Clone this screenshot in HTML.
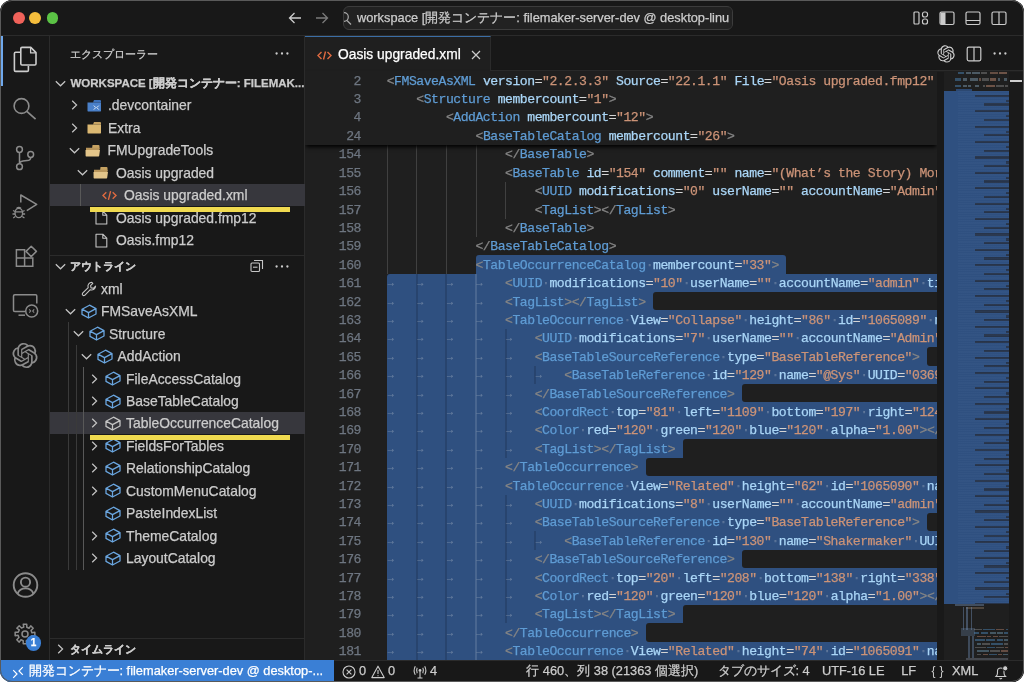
<!DOCTYPE html>
<html><head><meta charset="utf-8">
<style>
*{box-sizing:border-box;margin:0;padding:0}
html,body{width:1024px;height:682px;overflow:hidden;background:#ffffff}
body{font-family:"Liberation Sans",sans-serif;position:relative;-webkit-text-stroke:0.25px currentColor}
.win{position:absolute;left:0;top:0;width:1024px;height:682px;border-radius:12px;overflow:hidden;background:#181818;will-change:transform}
.abs{position:absolute}
.tb{left:0;top:0;width:1024px;height:36px;background:#181818;border-bottom:1px solid #2b2b2b}
.winborder{position:absolute;left:0;top:0;width:1024px;height:682px;border-radius:12px;border:1px solid #5a5a5a;pointer-events:none}
.light{position:absolute;width:11.8px;height:11.8px;border-radius:50%}
.act{left:0;top:36px;width:50px;height:624px;background:#181818;border-right:1px solid #2b2b2b}
.side{left:50px;top:36px;width:255px;height:624px;background:#181818;border-right:1px solid #2b2b2b}
.editor{left:305px;top:36px;width:719px;height:624px;background:#1f1f1f;overflow:hidden}
.tabs{left:0;top:0;width:719px;height:35px;background:#181818;border-bottom:1px solid #2b2b2b}
.tab{left:0;top:0;width:186px;height:35px;background:#1f1f1f;border-top:1px solid #3b6ea5;border-right:1px solid #2b2b2b}
.status{left:0;top:660px;width:1024px;height:22px;background:#181818;border-top:1px solid #2b2b2b;color:#cccccc;font-size:12.2px}
.cl,.ln{position:absolute;height:18.4px;line-height:18.4px;padding-top:1.6px;font-family:"Liberation Mono",monospace;font-size:13.1px;letter-spacing:-0.46px;white-space:pre}
.cl{left:81.7px}
.ln{left:0;width:56px;text-align:right;color:#6e7681}
.cl i{font-style:normal}
.cl i.ar{display:inline-block;width:7.4px;font-size:10px;letter-spacing:0;color:rgba(227,228,226,0.22);vertical-align:top;text-indent:1px}
.sel{position:absolute;background:#2f5080}
.row{position:absolute;left:0;width:255px;height:22.5px;line-height:22.5px;color:#cccccc;font-size:13.6px;white-space:nowrap}
.row .t{position:absolute;top:0}
.row svg{position:absolute}
svg{overflow:visible}
</style></head>
<body>
<div class="win">
  <!-- title bar -->
  <div class="abs tb">
    <div class="light" style="left:12.9px;top:12px;background:#f0625a"></div>
    <div class="light" style="left:29.4px;top:12px;background:#f5bd3c"></div>
    <div class="light" style="left:46.6px;top:12px;background:#5bc245"></div>
    <svg class="abs" style="left:288px;top:11px" width="14" height="14" viewBox="0 0 14 14"><path d="M13 7H1.5M6.5 2L1.5 7l5 5" stroke="#cccccc" stroke-width="1.3" fill="none"/></svg>
    <svg class="abs" style="left:315px;top:11px" width="14" height="14" viewBox="0 0 14 14"><path d="M1 7h11.5M7.5 2l5 5-5 5" stroke="#7a7a7a" stroke-width="1.3" fill="none"/></svg>
    <div class="abs" style="left:343px;top:5.5px;width:390px;height:24px;border:1px solid #3c3c3c;border-radius:6px;background:#222222;overflow:hidden">
      <svg class="abs" style="left:-2px;top:5px" width="12" height="14" viewBox="0 0 12 14"><circle cx="2" cy="5" r="4.3" stroke="#aaaaaa" stroke-width="1.2" fill="none"/><path d="M5 8.5l4 4" stroke="#aaaaaa" stroke-width="1.2"/></svg>
      <div class="abs" style="left:13px;top:0;line-height:22px;font-size:12.8px;color:#cccccc;white-space:nowrap">workspace [開発コンテナー: filemaker-server-dev @ desktop-linu</div><div class="abs" style="left:385px;top:0;width:10px;height:22px;background:#222222"></div><div></div>
    </div>
    <!-- layout icons -->
    <svg class="abs" style="left:913px;top:11px" width="16" height="14" viewBox="0 0 16 14"><rect x="1" y="1" width="5" height="12" rx="1" stroke="#cccccc" stroke-width="1.2" fill="none"/><rect x="9.5" y="1" width="5" height="5" rx="2" stroke="#cccccc" stroke-width="1.2" fill="none"/><rect x="9.5" y="8" width="5" height="5" rx="2" stroke="#cccccc" stroke-width="1.2" fill="none"/></svg>
    <svg class="abs" style="left:939px;top:11px" width="16" height="14" viewBox="0 0 16 14"><rect x="1" y="1" width="14" height="12.5" rx="1.5" stroke="#cccccc" stroke-width="1.2" fill="none"/><rect x="1.5" y="1.5" width="5" height="11.5" fill="#cccccc"/></svg>
    <svg class="abs" style="left:965px;top:11px" width="16" height="14" viewBox="0 0 16 14"><rect x="1" y="1" width="14" height="12.5" rx="1.5" stroke="#cccccc" stroke-width="1.2" fill="none"/><path d="M1 9.5h14" stroke="#cccccc" stroke-width="1.2"/></svg>
    <svg class="abs" style="left:991px;top:11px" width="16" height="14" viewBox="0 0 16 14"><rect x="1" y="1" width="14" height="12.5" rx="1.5" stroke="#cccccc" stroke-width="1.2" fill="none"/><path d="M8 1v12.5" stroke="#cccccc" stroke-width="1.2"/></svg>
  </div>

  <!-- activity bar -->
  <div class="abs act">
    <div class="abs" style="left:0;top:0;width:3px;height:50px;background:#6fa8ec"></div>
    <svg class="abs" style="left:12.0px;top:10.0px" width="26" height="27" viewBox="0 0 26 27"><path d="M8 6.2H3.6Q2.4 6.2 2.4 7.4V24.2Q2.4 25.4 3.6 25.4H15.2Q16.4 25.4 16.4 24.2V20" stroke="#cccccc" stroke-width="1.6" fill="none"/><path d="M10 1.4H18.8L24 6.6V17.8Q24 19 22.8 19H10Q8.8 19 8.8 17.8V2.6Q8.8 1.4 10 1.4Z" stroke="#cccccc" stroke-width="1.6" fill="none" stroke-linejoin="round"/><path d="M18.6 1.6V6.8H23.8" stroke="#cccccc" stroke-width="1.3" fill="none"/></svg>
<svg class="abs" style="left:10.0px;top:58.0px" width="30" height="30" viewBox="0 0 30 30"><circle cx="11.5" cy="12" r="7.4" stroke="#8b8b8b" stroke-width="1.6" fill="none"/><path d="M16.8 17.3L25.6 25.2" stroke="#8b8b8b" stroke-width="1.7"/></svg>
<svg class="abs" style="left:10.0px;top:106.0px" width="30" height="30" viewBox="0 0 30 30"><circle cx="9.5" cy="7.5" r="2.9" stroke="#8b8b8b" stroke-width="1.5" fill="none"/><circle cx="20.7" cy="12.5" r="2.9" stroke="#8b8b8b" stroke-width="1.5" fill="none"/><circle cx="9.5" cy="24.7" r="2.9" stroke="#8b8b8b" stroke-width="1.5" fill="none"/><path d="M9.5 10.4V21.8M20.7 15.4Q20.7 18.2 17 18.6L13 19Q9.5 19.4 9.5 21.8" stroke="#8b8b8b" stroke-width="1.5" fill="none"/></svg>
<svg class="abs" style="left:10.0px;top:156.0px" width="30" height="30" viewBox="0 0 30 30"><path d="M10.8 10.5V3L26.7 12.3 16.8 18.6" stroke="#8b8b8b" stroke-width="1.5" fill="none" stroke-linejoin="round"/><ellipse cx="8.8" cy="21" rx="3.8" ry="4.6" stroke="#8b8b8b" stroke-width="1.4" fill="none"/><path d="M6.5 16.5Q8.8 14.5 11.1 16.5M3 18.5L5 19.5M14.6 18.5L12.6 19.5M2.5 22H5M15.1 22H12.6M3.2 26L5.3 24.5M14.4 26L12.3 24.5M5 19.8H12.6" stroke="#8b8b8b" stroke-width="1.3" fill="none"/></svg>
<svg class="abs" style="left:12.0px;top:207.0px" width="28" height="28" viewBox="0 0 28 28"><path d="M4.4 6.8H12.6V15H4.4Z M4.4 15H12.6V23.2H4.4Z M12.6 15H20.8V23.2H12.6Z" stroke="#8b8b8b" stroke-width="1.5" fill="none"/><path d="M19.2 3.2L24.4 8.4 19.2 13.6 14 8.4Z" stroke="#8b8b8b" stroke-width="1.5" fill="none" stroke-linejoin="round"/></svg>
<svg class="abs" style="left:11.0px;top:256.0px" width="30" height="30" viewBox="0 0 30 30"><path d="M14 19.5H3.8Q2.5 19.5 2.5 18.2V4Q2.5 2.8 3.8 2.8H24.6Q25.8 2.8 25.8 4V11.5" stroke="#8b8b8b" stroke-width="1.5" fill="none"/><path d="M7.5 23.2H14" stroke="#8b8b8b" stroke-width="1.5"/><circle cx="20.7" cy="19" r="6" stroke="#8b8b8b" stroke-width="1.5" fill="none"/><path d="M18.2 17.3L19.7 19 18.2 20.7M23.2 17.3L21.7 19 23.2 20.7" stroke="#8b8b8b" stroke-width="1.1" fill="none"/></svg>
<svg class="abs" style="left:12.0px;top:306.5px" width="26" height="26" viewBox="0 0 26 26"><g transform="translate(0.40 -0.10) scale(1.0500)"><path d="M22.2819 9.8211a5.9847 5.9847 0 0 0-.5157-4.9108 6.0462 6.0462 0 0 0-6.5098-2.9A6.0651 6.0651 0 0 0 4.9807 4.1818a5.9847 5.9847 0 0 0-3.9977 2.9 6.0462 6.0462 0 0 0 .7427 7.0966 5.98 5.98 0 0 0 .511 4.9107 6.051 6.051 0 0 0 6.5146 2.9001A5.9847 5.9847 0 0 0 13.2599 24a6.0557 6.0557 0 0 0 5.7718-4.2058 5.9894 5.9894 0 0 0 3.9977-2.9001 6.0557 6.0557 0 0 0-.7475-7.0729zm-9.022 12.6081a4.4755 4.4755 0 0 1-2.8764-1.0408l.1419-.0804 4.7783-2.7582a.7948.7948 0 0 0 .3927-.6813v-6.7369l2.02 1.1686a.071.071 0 0 1 .038.052v5.5826a4.504 4.504 0 0 1-4.4945 4.4944zm-9.6607-4.1254a4.4708 4.4708 0 0 1-.5346-3.0137l.142.0852 4.783 2.7582a.7712.7712 0 0 0 .7806 0l5.8428-3.3685v2.3324a.0804.0804 0 0 1-.0332.0615L9.74 19.9502a4.4992 4.4992 0 0 1-6.1408-1.6464zM2.3408 7.8956a4.485 4.485 0 0 1 2.3655-1.9728V11.6a.7664.7664 0 0 0 .3879.6765l5.8144 3.3543-2.0201 1.1685a.0757.0757 0 0 1-.071 0l-4.8303-2.7865A4.504 4.504 0 0 1 2.3408 7.872zm16.5963 3.8558L13.1038 8.364 15.1192 7.2a.0757.0757 0 0 1 .071 0l4.8303 2.7913a4.4944 4.4944 0 0 1-.6765 8.1042v-5.6772a.79.79 0 0 0-.407-.667zm2.0107-3.0231l-.142-.0852-4.7735-2.7818a.7759.7759 0 0 0-.7854 0L9.409 9.2297V6.8974a.0662.0662 0 0 1 .0284-.0615l4.8303-2.7866a4.4992 4.4992 0 0 1 6.6802 4.66zM8.3065 12.863l-2.02-1.1638a.0804.0804 0 0 1-.038-.0567V6.0742a4.4992 4.4992 0 0 1 7.3757-3.4537l-.142.0805L8.704 5.459a.7948.7948 0 0 0-.3927.6813zm1.0976-2.3654l2.602-1.4998 2.6069 1.4998v2.9994l-2.5974 1.4997-2.6067-1.4997Z" fill="#8b8b8b"/></g></svg>
<svg class="abs" style="left:11.0px;top:535.0px" width="28" height="28" viewBox="0 0 28 28"><circle cx="14.5" cy="14" r="11.8" stroke="#8b8b8b" stroke-width="1.9" fill="none"/><circle cx="14.5" cy="11.2" r="4.6" stroke="#8b8b8b" stroke-width="1.9" fill="none"/><path d="M6.6 22.6Q8.5 17.4 14.5 17.4Q20.5 17.4 22.4 22.6" stroke="#8b8b8b" stroke-width="1.9" fill="none"/></svg>
<svg class="abs" style="left:10.5px;top:584.0px" width="28" height="28" viewBox="0 0 28 28"><path d="M23.85 12.26 L23.85 15.74 L20.76 15.81 L19.73 18.02 L22.19 19.74 L19.74 22.19 L17.50 20.06 L15.22 20.89 L15.74 23.85 L12.26 23.85 L12.19 20.76 L9.98 19.73 L8.26 22.19 L5.81 19.74 L7.94 17.50 L7.11 15.22 L4.15 15.74 L4.15 12.26 L7.24 12.19 L8.27 9.98 L5.81 8.26 L8.26 5.81 L10.50 7.94 L12.78 7.11 L12.26 4.15 L15.74 4.15 L15.81 7.24 L18.02 8.27 L19.74 5.81 L22.19 8.26 L20.06 10.50 L20.89 12.78Z" stroke="#8b8b8b" stroke-width="1.5" fill="none" stroke-linejoin="round"/><circle cx="14" cy="14" r="3" stroke="#8b8b8b" stroke-width="1.5" fill="none"/></svg>
<div class="abs" style="left:25.6px;top:599.1px;width:15.8px;height:15.8px;border-radius:50%;background:#3a7fd5;color:#fff;font-size:10px;font-weight:bold;line-height:15.8px;text-align:center">1</div>
  </div>

  <!-- sidebar -->
  <div class="abs side">
    <div class="abs" style="left:20.0px;top:7.8px;height:20px;line-height:20px;font-size:11.1px;color:#cccccc;white-space:nowrap;">エクスプローラー</div>
<svg class="abs" style="left:224.5px;top:15.8px" width="16" height="3" viewBox="0 0 16 3"><circle cx="1.6" cy="1.5" r="1.15" fill="#cccccc"/><circle cx="7" cy="1.5" r="1.15" fill="#cccccc"/><circle cx="12.4" cy="1.5" r="1.15" fill="#cccccc"/></svg>
<svg class="abs" style="left:4.8px;top:44.0px" width="11" height="7" viewBox="0 0 11 7"><path d="M0.8 1.2L5.5 5.8 10.2 1.2" stroke="#c5c5c5" stroke-width="1.2" fill="none"/></svg>
<div class="abs" style="left:20.5px;top:37.2px;height:20px;line-height:20px;font-size:11.5px;color:#cccccc;font-weight:bold;white-space:nowrap;">WORKSPACE [開発コンテナー: FILEMAK...</div>
<div class="abs" style="left:0;top:148.0px;width:255px;height:22.2px;background:#37373d"></div>
<div class="abs" style="left:0;top:376.2px;width:255px;height:22px;background:#37373d"></div>
<div class="abs" style="left:29.5px;top:148.0px;width:1px;height:22.0px;background:#585858"></div>
<svg class="abs" style="left:20.5px;top:64.2px" width="7" height="10" viewBox="0 0 7 10"><path d="M1.2 0.8L5.6 5 1.2 9.2" stroke="#c5c5c5" stroke-width="1.2" fill="none"/></svg>
<svg class="abs" style="left:36.5px;top:62.7px" width="15" height="13" viewBox="0 0 15 13"><path d="M7 1H13Q14 1 14 2V3.6H6Z" fill="#3b6fb8"/><path d="M0.5 3.6H14V11.8Q14 12.4 13.4 12.4H1.1Q0.5 12.4 0.5 11.8Z" fill="#4a80c9"/><path d="M6.8 6.6L8.8 8.6 6.8 10.6M11.8 6.6L9.8 8.6 11.8 10.6" stroke="#dfe9f7" stroke-width="1" fill="none"/></svg>
<div class="abs" style="left:58.0px;top:59.2px;height:20px;line-height:20px;font-size:13.9px;color:#cccccc;white-space:nowrap;">.devcontainer</div>
<svg class="abs" style="left:20.5px;top:86.7px" width="7" height="10" viewBox="0 0 7 10"><path d="M1.2 0.8L5.6 5 1.2 9.2" stroke="#c5c5c5" stroke-width="1.2" fill="none"/></svg>
<svg class="abs" style="left:36.5px;top:85.2px" width="15" height="13" viewBox="0 0 15 13"><path d="M7 1H13Q14 1 14 2V3.6H6Z" fill="#c6a262"/><path d="M0.5 3.6H14V11.8Q14 12.4 13.4 12.4H1.1Q0.5 12.4 0.5 11.8Z" fill="#dbb872"/></svg>
<div class="abs" style="left:58.0px;top:81.7px;height:20px;line-height:20px;font-size:13.9px;color:#cccccc;white-space:nowrap;">Extra</div>
<svg class="abs" style="left:18.5px;top:110.7px" width="11" height="7" viewBox="0 0 11 7"><path d="M0.8 1.2L5.5 5.8 10.2 1.2" stroke="#c5c5c5" stroke-width="1.2" fill="none"/></svg>
<svg class="abs" style="left:35.2px;top:107.7px" width="16" height="13" viewBox="0 0 16 13"><path d="M7.5 1H13.5Q14.5 1 14.5 2V5H7Z" fill="#c6a262"/><path d="M1 3.8H14.5V6H1Z" fill="#b8955a"/><path d="M0.5 6H15L14.2 11.8Q14.1 12.4 13.5 12.4H1.2Q0.6 12.4 0.6 11.8Z" fill="#e3c58a"/></svg>
<div class="abs" style="left:57.5px;top:104.2px;height:20px;line-height:20px;font-size:13.9px;color:#cccccc;white-space:nowrap;">FMUpgradeTools</div>
<svg class="abs" style="left:26.5px;top:133.2px" width="11" height="7" viewBox="0 0 11 7"><path d="M0.8 1.2L5.5 5.8 10.2 1.2" stroke="#c5c5c5" stroke-width="1.2" fill="none"/></svg>
<svg class="abs" style="left:42.5px;top:130.2px" width="16" height="13" viewBox="0 0 16 13"><path d="M7.5 1H13.5Q14.5 1 14.5 2V5H7Z" fill="#c6a262"/><path d="M1 3.8H14.5V6H1Z" fill="#b8955a"/><path d="M0.5 6H15L14.2 11.8Q14.1 12.4 13.5 12.4H1.2Q0.6 12.4 0.6 11.8Z" fill="#e3c58a"/></svg>
<div class="abs" style="left:66.0px;top:126.7px;height:20px;line-height:20px;font-size:13.9px;color:#cccccc;white-space:nowrap;">Oasis upgraded</div>
<svg class="abs" style="left:51.9px;top:153.7px" width="15" height="11" viewBox="0 0 15 11"><path d="M4.3 2.2L1 5.5 4.3 8.8M10.7 2.2L14 5.5 10.7 8.8M8.6 1.2L6.4 9.8" stroke="#de6a40" stroke-width="1.4" fill="none"/></svg>
<div class="abs" style="left:74.0px;top:149.2px;height:20px;line-height:20px;font-size:13.9px;color:#cccccc;white-space:nowrap;">Oasis upgraded.xml</div>
<svg class="abs" style="left:44.8px;top:174.2px" width="13" height="15" viewBox="0 0 13 15"><path d="M1 1.2H7.8L11.8 5.2V14H1Z M7.8 1.2V5.2H11.8" stroke="#c5c5c5" stroke-width="1.1" fill="none" stroke-linejoin="round"/></svg>
<div class="abs" style="left:66.0px;top:171.7px;height:20px;line-height:20px;font-size:13.9px;color:#cccccc;white-space:nowrap;">Oasis upgraded.fmp12</div>
<svg class="abs" style="left:44.8px;top:196.7px" width="13" height="15" viewBox="0 0 13 15"><path d="M1 1.2H7.8L11.8 5.2V14H1Z M7.8 1.2V5.2H11.8" stroke="#c5c5c5" stroke-width="1.1" fill="none" stroke-linejoin="round"/></svg>
<div class="abs" style="left:66.0px;top:194.2px;height:20px;line-height:20px;font-size:13.9px;color:#cccccc;white-space:nowrap;">Oasis.fmp12</div>
<div class="abs" style="left:0;top:219.0px;width:255px;height:1px;background:#2b2b2b"></div>
<svg class="abs" style="left:4.8px;top:226.5px" width="11" height="7" viewBox="0 0 11 7"><path d="M0.8 1.2L5.5 5.8 10.2 1.2" stroke="#c5c5c5" stroke-width="1.2" fill="none"/></svg>
<div class="abs" style="left:20.2px;top:219.8px;height:20px;line-height:20px;font-size:11.3px;color:#cccccc;font-weight:bold;white-space:nowrap;">アウトライン</div>
<svg class="abs" style="left:200.0px;top:223.0px" width="14" height="14" viewBox="0 0 14 14"><rect x="1" y="4" width="8.5" height="8.5" rx="1" stroke="#c5c5c5" stroke-width="1.1" fill="none"/><path d="M4 1.5H12.5V10" stroke="#c5c5c5" stroke-width="1.1" fill="none"/><path d="M3 8.2H7.5" stroke="#c5c5c5" stroke-width="1.1"/></svg>
<svg class="abs" style="left:225.0px;top:228.8px" width="16" height="3" viewBox="0 0 16 3"><circle cx="1.6" cy="1.5" r="1.15" fill="#cccccc"/><circle cx="7" cy="1.5" r="1.15" fill="#cccccc"/><circle cx="12.4" cy="1.5" r="1.15" fill="#cccccc"/></svg>
<div class="abs" style="left:17.5px;top:286.0px;width:1px;height:248.0px;background:#3a3a3a"></div>
<div class="abs" style="left:25.5px;top:309.0px;width:1px;height:225.0px;background:#3a3a3a"></div>
<div class="abs" style="left:33.3px;top:331.0px;width:1px;height:203.0px;background:#585858"></div>
<svg class="abs" style="left:30.8px;top:244.7px" width="16" height="16" viewBox="0 0 16 16"><path d="M10.8 1.3a3.9 3.9 0 0 0-3.6 5.3L1.6 12.2a1.5 1.5 0 0 0 2.1 2.1l5.6-5.6a3.9 3.9 0 0 0 5.3-3.6l-2.3 2.2-2.3-0.4-0.4-2.3 2.2-2.3z" stroke="#c5c5c5" stroke-width="1.1" fill="none" stroke-linejoin="round"/></svg>
<div class="abs" style="left:51.0px;top:242.7px;height:20px;line-height:20px;font-size:13.9px;color:#cccccc;white-space:nowrap;">xml</div>
<svg class="abs" style="left:14.5px;top:271.7px" width="11" height="7" viewBox="0 0 11 7"><path d="M0.8 1.2L5.5 5.8 10.2 1.2" stroke="#c5c5c5" stroke-width="1.2" fill="none"/></svg>
<svg class="abs" style="left:30.8px;top:267.7px" width="16" height="15" viewBox="0 0 16 15"><path d="M1 5.2L8.5 1.2 15 4.6V10L7.5 14 1 10.4Z M1 5.2L7.5 8.6 15 4.6 M7.5 8.6V14" stroke="#6aa6e0" stroke-width="1.3" fill="none" stroke-linejoin="round"/></svg>
<div class="abs" style="left:51.0px;top:265.2px;height:20px;line-height:20px;font-size:13.9px;color:#cccccc;white-space:nowrap;">FMSaveAsXML</div>
<svg class="abs" style="left:22.5px;top:294.2px" width="11" height="7" viewBox="0 0 11 7"><path d="M0.8 1.2L5.5 5.8 10.2 1.2" stroke="#c5c5c5" stroke-width="1.2" fill="none"/></svg>
<svg class="abs" style="left:38.7px;top:290.2px" width="16" height="15" viewBox="0 0 16 15"><path d="M1 5.2L8.5 1.2 15 4.6V10L7.5 14 1 10.4Z M1 5.2L7.5 8.6 15 4.6 M7.5 8.6V14" stroke="#6aa6e0" stroke-width="1.3" fill="none" stroke-linejoin="round"/></svg>
<div class="abs" style="left:59.0px;top:287.7px;height:20px;line-height:20px;font-size:13.9px;color:#cccccc;white-space:nowrap;">Structure</div>
<svg class="abs" style="left:30.5px;top:316.7px" width="11" height="7" viewBox="0 0 11 7"><path d="M0.8 1.2L5.5 5.8 10.2 1.2" stroke="#c5c5c5" stroke-width="1.2" fill="none"/></svg>
<svg class="abs" style="left:46.6px;top:312.7px" width="16" height="15" viewBox="0 0 16 15"><path d="M1 5.2L8.5 1.2 15 4.6V10L7.5 14 1 10.4Z M1 5.2L7.5 8.6 15 4.6 M7.5 8.6V14" stroke="#6aa6e0" stroke-width="1.3" fill="none" stroke-linejoin="round"/></svg>
<div class="abs" style="left:67.5px;top:310.2px;height:20px;line-height:20px;font-size:13.9px;color:#cccccc;white-space:nowrap;">AddAction</div>
<svg class="abs" style="left:40.5px;top:337.7px" width="7" height="10" viewBox="0 0 7 10"><path d="M1.2 0.8L5.6 5 1.2 9.2" stroke="#c5c5c5" stroke-width="1.2" fill="none"/></svg>
<svg class="abs" style="left:55.2px;top:335.2px" width="16" height="15" viewBox="0 0 16 15"><path d="M1 5.2L8.5 1.2 15 4.6V10L7.5 14 1 10.4Z M1 5.2L7.5 8.6 15 4.6 M7.5 8.6V14" stroke="#6aa6e0" stroke-width="1.3" fill="none" stroke-linejoin="round"/></svg>
<div class="abs" style="left:76.0px;top:332.7px;height:20px;line-height:20px;font-size:13.9px;color:#cccccc;white-space:nowrap;">FileAccessCatalog</div>
<svg class="abs" style="left:40.5px;top:360.2px" width="7" height="10" viewBox="0 0 7 10"><path d="M1.2 0.8L5.6 5 1.2 9.2" stroke="#c5c5c5" stroke-width="1.2" fill="none"/></svg>
<svg class="abs" style="left:55.2px;top:357.7px" width="16" height="15" viewBox="0 0 16 15"><path d="M1 5.2L8.5 1.2 15 4.6V10L7.5 14 1 10.4Z M1 5.2L7.5 8.6 15 4.6 M7.5 8.6V14" stroke="#6aa6e0" stroke-width="1.3" fill="none" stroke-linejoin="round"/></svg>
<div class="abs" style="left:76.0px;top:355.2px;height:20px;line-height:20px;font-size:13.9px;color:#cccccc;white-space:nowrap;">BaseTableCatalog</div>
<svg class="abs" style="left:40.5px;top:382.2px" width="7" height="10" viewBox="0 0 7 10"><path d="M1.2 0.8L5.6 5 1.2 9.2" stroke="#c5c5c5" stroke-width="1.2" fill="none"/></svg>
<svg class="abs" style="left:55.2px;top:379.7px" width="16" height="15" viewBox="0 0 16 15"><path d="M1 5.2L8.5 1.2 15 4.6V10L7.5 14 1 10.4Z M1 5.2L7.5 8.6 15 4.6 M7.5 8.6V14" stroke="#c5c5c5" stroke-width="1.3" fill="none" stroke-linejoin="round"/></svg>
<div class="abs" style="left:76.0px;top:377.2px;height:20px;line-height:20px;font-size:13.9px;color:#cccccc;white-space:nowrap;">TableOccurrenceCatalog</div>
<svg class="abs" style="left:40.5px;top:404.7px" width="7" height="10" viewBox="0 0 7 10"><path d="M1.2 0.8L5.6 5 1.2 9.2" stroke="#c5c5c5" stroke-width="1.2" fill="none"/></svg>
<svg class="abs" style="left:55.2px;top:402.2px" width="16" height="15" viewBox="0 0 16 15"><path d="M1 5.2L8.5 1.2 15 4.6V10L7.5 14 1 10.4Z M1 5.2L7.5 8.6 15 4.6 M7.5 8.6V14" stroke="#6aa6e0" stroke-width="1.3" fill="none" stroke-linejoin="round"/></svg>
<div class="abs" style="left:76.0px;top:399.7px;height:20px;line-height:20px;font-size:13.9px;color:#cccccc;white-space:nowrap;">FieldsForTables</div>
<svg class="abs" style="left:40.5px;top:427.2px" width="7" height="10" viewBox="0 0 7 10"><path d="M1.2 0.8L5.6 5 1.2 9.2" stroke="#c5c5c5" stroke-width="1.2" fill="none"/></svg>
<svg class="abs" style="left:55.2px;top:424.7px" width="16" height="15" viewBox="0 0 16 15"><path d="M1 5.2L8.5 1.2 15 4.6V10L7.5 14 1 10.4Z M1 5.2L7.5 8.6 15 4.6 M7.5 8.6V14" stroke="#6aa6e0" stroke-width="1.3" fill="none" stroke-linejoin="round"/></svg>
<div class="abs" style="left:76.0px;top:422.2px;height:20px;line-height:20px;font-size:13.9px;color:#cccccc;white-space:nowrap;">RelationshipCatalog</div>
<svg class="abs" style="left:40.5px;top:449.7px" width="7" height="10" viewBox="0 0 7 10"><path d="M1.2 0.8L5.6 5 1.2 9.2" stroke="#c5c5c5" stroke-width="1.2" fill="none"/></svg>
<svg class="abs" style="left:55.2px;top:447.2px" width="16" height="15" viewBox="0 0 16 15"><path d="M1 5.2L8.5 1.2 15 4.6V10L7.5 14 1 10.4Z M1 5.2L7.5 8.6 15 4.6 M7.5 8.6V14" stroke="#6aa6e0" stroke-width="1.3" fill="none" stroke-linejoin="round"/></svg>
<div class="abs" style="left:76.0px;top:444.7px;height:20px;line-height:20px;font-size:13.9px;color:#cccccc;white-space:nowrap;">CustomMenuCatalog</div>
<svg class="abs" style="left:55.2px;top:469.7px" width="16" height="15" viewBox="0 0 16 15"><path d="M1 5.2L8.5 1.2 15 4.6V10L7.5 14 1 10.4Z M1 5.2L7.5 8.6 15 4.6 M7.5 8.6V14" stroke="#6aa6e0" stroke-width="1.3" fill="none" stroke-linejoin="round"/></svg>
<div class="abs" style="left:76.0px;top:467.2px;height:20px;line-height:20px;font-size:13.9px;color:#cccccc;white-space:nowrap;">PasteIndexList</div>
<svg class="abs" style="left:40.5px;top:494.7px" width="7" height="10" viewBox="0 0 7 10"><path d="M1.2 0.8L5.6 5 1.2 9.2" stroke="#c5c5c5" stroke-width="1.2" fill="none"/></svg>
<svg class="abs" style="left:55.2px;top:492.2px" width="16" height="15" viewBox="0 0 16 15"><path d="M1 5.2L8.5 1.2 15 4.6V10L7.5 14 1 10.4Z M1 5.2L7.5 8.6 15 4.6 M7.5 8.6V14" stroke="#6aa6e0" stroke-width="1.3" fill="none" stroke-linejoin="round"/></svg>
<div class="abs" style="left:76.0px;top:489.7px;height:20px;line-height:20px;font-size:13.9px;color:#cccccc;white-space:nowrap;">ThemeCatalog</div>
<svg class="abs" style="left:40.5px;top:517.2px" width="7" height="10" viewBox="0 0 7 10"><path d="M1.2 0.8L5.6 5 1.2 9.2" stroke="#c5c5c5" stroke-width="1.2" fill="none"/></svg>
<svg class="abs" style="left:55.2px;top:514.7px" width="16" height="15" viewBox="0 0 16 15"><path d="M1 5.2L8.5 1.2 15 4.6V10L7.5 14 1 10.4Z M1 5.2L7.5 8.6 15 4.6 M7.5 8.6V14" stroke="#6aa6e0" stroke-width="1.3" fill="none" stroke-linejoin="round"/></svg>
<div class="abs" style="left:76.0px;top:512.2px;height:20px;line-height:20px;font-size:13.9px;color:#cccccc;white-space:nowrap;">LayoutCatalog</div>
<div class="abs" style="left:39.5px;top:170.6px;width:200.5px;height:5.2px;background:#f0da50"></div>
<div class="abs" style="left:39.5px;top:398.8px;width:200.5px;height:5.2px;background:#f0da50"></div>
<div class="abs" style="left:0;top:601.5px;width:255px;height:1px;background:#2b2b2b"></div>
<svg class="abs" style="left:7.0px;top:607.8px" width="7" height="10" viewBox="0 0 7 10"><path d="M1.2 0.8L5.6 5 1.2 9.2" stroke="#c5c5c5" stroke-width="1.2" fill="none"/></svg>
<div class="abs" style="left:20.2px;top:602.6px;height:20px;line-height:20px;font-size:11.3px;color:#cccccc;font-weight:bold;white-space:nowrap;">タイムライン</div>
  </div>

  <!-- editor -->
  <div class="abs editor">
    <div class="abs tabs">
      <div class="abs tab">
        <svg class="abs" style="left:12px;top:12.5px" width="15" height="11" viewBox="0 0 15 11"><path d="M4.5 2L1 5.5 4.5 9M10.5 2L14 5.5 10.5 9M8.5 1.5L6.5 9.5" stroke="#de6a40" stroke-width="1.4" fill="none"/></svg>
        <div class="abs" style="left:33px;top:0;line-height:35px;font-size:13.8px;color:#ffffff;white-space:nowrap">Oasis upgraded.xml</div>
        <svg class="abs" style="left:166px;top:13px" width="10" height="10" viewBox="0 0 10 10"><path d="M1 1l8 8M9 1L1 9" stroke="#cccccc" stroke-width="1.2"/></svg>
      </div>
      <svg class="abs" style="left:631px;top:7.5px" width="20" height="20" viewBox="0 0 20 20"><g transform="translate(1.30 1.20) scale(0.7250)"><path d="M22.2819 9.8211a5.9847 5.9847 0 0 0-.5157-4.9108 6.0462 6.0462 0 0 0-6.5098-2.9A6.0651 6.0651 0 0 0 4.9807 4.1818a5.9847 5.9847 0 0 0-3.9977 2.9 6.0462 6.0462 0 0 0 .7427 7.0966 5.98 5.98 0 0 0 .511 4.9107 6.051 6.051 0 0 0 6.5146 2.9001A5.9847 5.9847 0 0 0 13.2599 24a6.0557 6.0557 0 0 0 5.7718-4.2058 5.9894 5.9894 0 0 0 3.9977-2.9001 6.0557 6.0557 0 0 0-.7475-7.0729zm-9.022 12.6081a4.4755 4.4755 0 0 1-2.8764-1.0408l.1419-.0804 4.7783-2.7582a.7948.7948 0 0 0 .3927-.6813v-6.7369l2.02 1.1686a.071.071 0 0 1 .038.052v5.5826a4.504 4.504 0 0 1-4.4945 4.4944zm-9.6607-4.1254a4.4708 4.4708 0 0 1-.5346-3.0137l.142.0852 4.783 2.7582a.7712.7712 0 0 0 .7806 0l5.8428-3.3685v2.3324a.0804.0804 0 0 1-.0332.0615L9.74 19.9502a4.4992 4.4992 0 0 1-6.1408-1.6464zM2.3408 7.8956a4.485 4.485 0 0 1 2.3655-1.9728V11.6a.7664.7664 0 0 0 .3879.6765l5.8144 3.3543-2.0201 1.1685a.0757.0757 0 0 1-.071 0l-4.8303-2.7865A4.504 4.504 0 0 1 2.3408 7.872zm16.5963 3.8558L13.1038 8.364 15.1192 7.2a.0757.0757 0 0 1 .071 0l4.8303 2.7913a4.4944 4.4944 0 0 1-.6765 8.1042v-5.6772a.79.79 0 0 0-.407-.667zm2.0107-3.0231l-.142-.0852-4.7735-2.7818a.7759.7759 0 0 0-.7854 0L9.409 9.2297V6.8974a.0662.0662 0 0 1 .0284-.0615l4.8303-2.7866a4.4992 4.4992 0 0 1 6.6802 4.66zM8.3065 12.863l-2.02-1.1638a.0804.0804 0 0 1-.038-.0567V6.0742a4.4992 4.4992 0 0 1 7.3757-3.4537l-.142.0805L8.704 5.459a.7948.7948 0 0 0-.3927.6813zm1.0976-2.3654l2.602-1.4998 2.6069 1.4998v2.9994l-2.5974 1.4997-2.6067-1.4997Z" fill="#cccccc"/></g></svg>
<svg class="abs" style="left:661px;top:10px" width="16" height="16" viewBox="0 0 16 16"><rect x="1.2" y="1.2" width="13.6" height="13.6" rx="1.5" stroke="#cccccc" stroke-width="1.2" fill="none"/><path d="M8 1.2V14.8" stroke="#cccccc" stroke-width="1.2"/></svg>
<svg class="abs" style="left:687.5px;top:15.600000000000001px" width="16" height="3" viewBox="0 0 16 3"><circle cx="1.6" cy="1.5" r="1.15" fill="#cccccc"/><circle cx="7" cy="1.5" r="1.15" fill="#cccccc"/><circle cx="12.4" cy="1.5" r="1.15" fill="#cccccc"/></svg>
    </div>
    <div class="abs" style="left:0;top:35px;width:719px;height:589px;background:#1f1f1f"></div>
    <div class="abs" style="left:0;top:-36px;width:632px;height:682px;overflow:hidden">
      <div class="sel" style="left:170.50px;top:255.30px;width:310.80px;height:18.90px;border-radius:3px 3px 0 0"></div>
<div class="sel" style="left:81.70px;top:273.70px;width:560.30px;height:391.40px;border-radius:3px 0 0 0"></div>
<div class="abs" style="left:348.10px;top:292.10px;width:303.90px;height:18.40px;background:#1f1f1f;border-radius:3px 0 0 3px"></div>
<div class="abs" style="left:621.90px;top:347.30px;width:30.10px;height:18.40px;background:#1f1f1f;border-radius:3px 0 0 3px"></div>
<div class="abs" style="left:436.90px;top:384.10px;width:215.10px;height:18.40px;background:#1f1f1f;border-radius:3px 0 0 3px"></div>
<div class="abs" style="left:377.70px;top:439.30px;width:274.30px;height:18.40px;background:#1f1f1f;border-radius:3px 0 0 0px"></div>
<div class="abs" style="left:340.70px;top:457.70px;width:311.30px;height:18.40px;background:#1f1f1f;border-radius:3px 0 0 3px"></div>
<div class="abs" style="left:621.90px;top:512.90px;width:30.10px;height:18.40px;background:#1f1f1f;border-radius:3px 0 0 3px"></div>
<div class="abs" style="left:436.90px;top:549.70px;width:215.10px;height:18.40px;background:#1f1f1f;border-radius:3px 0 0 3px"></div>
<div class="abs" style="left:377.70px;top:604.90px;width:274.30px;height:18.40px;background:#1f1f1f;border-radius:3px 0 0 0px"></div>
<div class="abs" style="left:340.70px;top:623.30px;width:311.30px;height:18.40px;background:#1f1f1f;border-radius:3px 0 0 3px"></div>
<div class="abs" style="left:81.70px;top:144.90px;width:1px;height:18.60px;background:#404040"></div>
<div class="abs" style="left:111.30px;top:144.90px;width:1px;height:18.60px;background:#404040"></div>
<div class="abs" style="left:140.90px;top:144.90px;width:1px;height:18.60px;background:#404040"></div>
<div class="abs" style="left:170.50px;top:144.90px;width:1px;height:18.60px;background:#404040"></div>
<div class="abs" style="left:81.70px;top:163.30px;width:1px;height:18.60px;background:#404040"></div>
<div class="abs" style="left:111.30px;top:163.30px;width:1px;height:18.60px;background:#404040"></div>
<div class="abs" style="left:140.90px;top:163.30px;width:1px;height:18.60px;background:#404040"></div>
<div class="abs" style="left:170.50px;top:163.30px;width:1px;height:18.60px;background:#404040"></div>
<div class="abs" style="left:81.70px;top:181.70px;width:1px;height:18.60px;background:#404040"></div>
<div class="abs" style="left:111.30px;top:181.70px;width:1px;height:18.60px;background:#404040"></div>
<div class="abs" style="left:140.90px;top:181.70px;width:1px;height:18.60px;background:#404040"></div>
<div class="abs" style="left:170.50px;top:181.70px;width:1px;height:18.60px;background:#404040"></div>
<div class="abs" style="left:200.10px;top:181.70px;width:1px;height:18.60px;background:#404040"></div>
<div class="abs" style="left:81.70px;top:200.10px;width:1px;height:18.60px;background:#404040"></div>
<div class="abs" style="left:111.30px;top:200.10px;width:1px;height:18.60px;background:#404040"></div>
<div class="abs" style="left:140.90px;top:200.10px;width:1px;height:18.60px;background:#404040"></div>
<div class="abs" style="left:170.50px;top:200.10px;width:1px;height:18.60px;background:#404040"></div>
<div class="abs" style="left:200.10px;top:200.10px;width:1px;height:18.60px;background:#404040"></div>
<div class="abs" style="left:81.70px;top:218.50px;width:1px;height:18.60px;background:#404040"></div>
<div class="abs" style="left:111.30px;top:218.50px;width:1px;height:18.60px;background:#404040"></div>
<div class="abs" style="left:140.90px;top:218.50px;width:1px;height:18.60px;background:#404040"></div>
<div class="abs" style="left:170.50px;top:218.50px;width:1px;height:18.60px;background:#404040"></div>
<div class="abs" style="left:81.70px;top:236.90px;width:1px;height:18.60px;background:#404040"></div>
<div class="abs" style="left:111.30px;top:236.90px;width:1px;height:18.60px;background:#404040"></div>
<div class="abs" style="left:140.90px;top:236.90px;width:1px;height:18.60px;background:#404040"></div>
<div class="abs" style="left:81.70px;top:255.30px;width:1px;height:18.60px;background:#404040"></div>
<div class="abs" style="left:111.30px;top:255.30px;width:1px;height:18.60px;background:#404040"></div>
<div class="abs" style="left:140.90px;top:255.30px;width:1px;height:18.60px;background:#404040"></div>
<div class="abs" style="left:110.80px;top:273.70px;width:2px;height:18.60px;background:rgba(0,0,0,0.14)"></div>
<div class="abs" style="left:140.40px;top:273.70px;width:2px;height:18.60px;background:rgba(0,0,0,0.14)"></div>
<div class="abs" style="left:170.00px;top:273.70px;width:2px;height:18.60px;background:rgba(255,255,255,0.13)"></div>
<div class="abs" style="left:110.80px;top:292.10px;width:2px;height:18.60px;background:rgba(0,0,0,0.14)"></div>
<div class="abs" style="left:140.40px;top:292.10px;width:2px;height:18.60px;background:rgba(0,0,0,0.14)"></div>
<div class="abs" style="left:170.00px;top:292.10px;width:2px;height:18.60px;background:rgba(255,255,255,0.13)"></div>
<div class="abs" style="left:110.80px;top:310.50px;width:2px;height:18.60px;background:rgba(0,0,0,0.14)"></div>
<div class="abs" style="left:140.40px;top:310.50px;width:2px;height:18.60px;background:rgba(0,0,0,0.14)"></div>
<div class="abs" style="left:170.00px;top:310.50px;width:2px;height:18.60px;background:rgba(255,255,255,0.13)"></div>
<div class="abs" style="left:110.80px;top:328.90px;width:2px;height:18.60px;background:rgba(0,0,0,0.14)"></div>
<div class="abs" style="left:140.40px;top:328.90px;width:2px;height:18.60px;background:rgba(0,0,0,0.14)"></div>
<div class="abs" style="left:170.00px;top:328.90px;width:2px;height:18.60px;background:rgba(255,255,255,0.13)"></div>
<div class="abs" style="left:199.60px;top:328.90px;width:2px;height:18.60px;background:rgba(0,0,0,0.14)"></div>
<div class="abs" style="left:110.80px;top:347.30px;width:2px;height:18.60px;background:rgba(0,0,0,0.14)"></div>
<div class="abs" style="left:140.40px;top:347.30px;width:2px;height:18.60px;background:rgba(0,0,0,0.14)"></div>
<div class="abs" style="left:170.00px;top:347.30px;width:2px;height:18.60px;background:rgba(255,255,255,0.13)"></div>
<div class="abs" style="left:199.60px;top:347.30px;width:2px;height:18.60px;background:rgba(0,0,0,0.14)"></div>
<div class="abs" style="left:110.80px;top:365.70px;width:2px;height:18.60px;background:rgba(0,0,0,0.14)"></div>
<div class="abs" style="left:140.40px;top:365.70px;width:2px;height:18.60px;background:rgba(0,0,0,0.14)"></div>
<div class="abs" style="left:170.00px;top:365.70px;width:2px;height:18.60px;background:rgba(255,255,255,0.13)"></div>
<div class="abs" style="left:199.60px;top:365.70px;width:2px;height:18.60px;background:rgba(0,0,0,0.14)"></div>
<div class="abs" style="left:229.20px;top:365.70px;width:2px;height:18.60px;background:rgba(0,0,0,0.14)"></div>
<div class="abs" style="left:110.80px;top:384.10px;width:2px;height:18.60px;background:rgba(0,0,0,0.14)"></div>
<div class="abs" style="left:140.40px;top:384.10px;width:2px;height:18.60px;background:rgba(0,0,0,0.14)"></div>
<div class="abs" style="left:170.00px;top:384.10px;width:2px;height:18.60px;background:rgba(255,255,255,0.13)"></div>
<div class="abs" style="left:199.60px;top:384.10px;width:2px;height:18.60px;background:rgba(0,0,0,0.14)"></div>
<div class="abs" style="left:110.80px;top:402.50px;width:2px;height:18.60px;background:rgba(0,0,0,0.14)"></div>
<div class="abs" style="left:140.40px;top:402.50px;width:2px;height:18.60px;background:rgba(0,0,0,0.14)"></div>
<div class="abs" style="left:170.00px;top:402.50px;width:2px;height:18.60px;background:rgba(255,255,255,0.13)"></div>
<div class="abs" style="left:199.60px;top:402.50px;width:2px;height:18.60px;background:rgba(0,0,0,0.14)"></div>
<div class="abs" style="left:110.80px;top:420.90px;width:2px;height:18.60px;background:rgba(0,0,0,0.14)"></div>
<div class="abs" style="left:140.40px;top:420.90px;width:2px;height:18.60px;background:rgba(0,0,0,0.14)"></div>
<div class="abs" style="left:170.00px;top:420.90px;width:2px;height:18.60px;background:rgba(255,255,255,0.13)"></div>
<div class="abs" style="left:199.60px;top:420.90px;width:2px;height:18.60px;background:rgba(0,0,0,0.14)"></div>
<div class="abs" style="left:110.80px;top:439.30px;width:2px;height:18.60px;background:rgba(0,0,0,0.14)"></div>
<div class="abs" style="left:140.40px;top:439.30px;width:2px;height:18.60px;background:rgba(0,0,0,0.14)"></div>
<div class="abs" style="left:170.00px;top:439.30px;width:2px;height:18.60px;background:rgba(255,255,255,0.13)"></div>
<div class="abs" style="left:199.60px;top:439.30px;width:2px;height:18.60px;background:rgba(0,0,0,0.14)"></div>
<div class="abs" style="left:110.80px;top:457.70px;width:2px;height:18.60px;background:rgba(0,0,0,0.14)"></div>
<div class="abs" style="left:140.40px;top:457.70px;width:2px;height:18.60px;background:rgba(0,0,0,0.14)"></div>
<div class="abs" style="left:170.00px;top:457.70px;width:2px;height:18.60px;background:rgba(255,255,255,0.13)"></div>
<div class="abs" style="left:110.80px;top:476.10px;width:2px;height:18.60px;background:rgba(0,0,0,0.14)"></div>
<div class="abs" style="left:140.40px;top:476.10px;width:2px;height:18.60px;background:rgba(0,0,0,0.14)"></div>
<div class="abs" style="left:170.00px;top:476.10px;width:2px;height:18.60px;background:rgba(255,255,255,0.13)"></div>
<div class="abs" style="left:110.80px;top:494.50px;width:2px;height:18.60px;background:rgba(0,0,0,0.14)"></div>
<div class="abs" style="left:140.40px;top:494.50px;width:2px;height:18.60px;background:rgba(0,0,0,0.14)"></div>
<div class="abs" style="left:170.00px;top:494.50px;width:2px;height:18.60px;background:rgba(255,255,255,0.13)"></div>
<div class="abs" style="left:199.60px;top:494.50px;width:2px;height:18.60px;background:rgba(0,0,0,0.14)"></div>
<div class="abs" style="left:110.80px;top:512.90px;width:2px;height:18.60px;background:rgba(0,0,0,0.14)"></div>
<div class="abs" style="left:140.40px;top:512.90px;width:2px;height:18.60px;background:rgba(0,0,0,0.14)"></div>
<div class="abs" style="left:170.00px;top:512.90px;width:2px;height:18.60px;background:rgba(255,255,255,0.13)"></div>
<div class="abs" style="left:199.60px;top:512.90px;width:2px;height:18.60px;background:rgba(0,0,0,0.14)"></div>
<div class="abs" style="left:110.80px;top:531.30px;width:2px;height:18.60px;background:rgba(0,0,0,0.14)"></div>
<div class="abs" style="left:140.40px;top:531.30px;width:2px;height:18.60px;background:rgba(0,0,0,0.14)"></div>
<div class="abs" style="left:170.00px;top:531.30px;width:2px;height:18.60px;background:rgba(255,255,255,0.13)"></div>
<div class="abs" style="left:199.60px;top:531.30px;width:2px;height:18.60px;background:rgba(0,0,0,0.14)"></div>
<div class="abs" style="left:229.20px;top:531.30px;width:2px;height:18.60px;background:rgba(0,0,0,0.14)"></div>
<div class="abs" style="left:110.80px;top:549.70px;width:2px;height:18.60px;background:rgba(0,0,0,0.14)"></div>
<div class="abs" style="left:140.40px;top:549.70px;width:2px;height:18.60px;background:rgba(0,0,0,0.14)"></div>
<div class="abs" style="left:170.00px;top:549.70px;width:2px;height:18.60px;background:rgba(255,255,255,0.13)"></div>
<div class="abs" style="left:199.60px;top:549.70px;width:2px;height:18.60px;background:rgba(0,0,0,0.14)"></div>
<div class="abs" style="left:110.80px;top:568.10px;width:2px;height:18.60px;background:rgba(0,0,0,0.14)"></div>
<div class="abs" style="left:140.40px;top:568.10px;width:2px;height:18.60px;background:rgba(0,0,0,0.14)"></div>
<div class="abs" style="left:170.00px;top:568.10px;width:2px;height:18.60px;background:rgba(255,255,255,0.13)"></div>
<div class="abs" style="left:199.60px;top:568.10px;width:2px;height:18.60px;background:rgba(0,0,0,0.14)"></div>
<div class="abs" style="left:110.80px;top:586.50px;width:2px;height:18.60px;background:rgba(0,0,0,0.14)"></div>
<div class="abs" style="left:140.40px;top:586.50px;width:2px;height:18.60px;background:rgba(0,0,0,0.14)"></div>
<div class="abs" style="left:170.00px;top:586.50px;width:2px;height:18.60px;background:rgba(255,255,255,0.13)"></div>
<div class="abs" style="left:199.60px;top:586.50px;width:2px;height:18.60px;background:rgba(0,0,0,0.14)"></div>
<div class="abs" style="left:110.80px;top:604.90px;width:2px;height:18.60px;background:rgba(0,0,0,0.14)"></div>
<div class="abs" style="left:140.40px;top:604.90px;width:2px;height:18.60px;background:rgba(0,0,0,0.14)"></div>
<div class="abs" style="left:170.00px;top:604.90px;width:2px;height:18.60px;background:rgba(255,255,255,0.13)"></div>
<div class="abs" style="left:199.60px;top:604.90px;width:2px;height:18.60px;background:rgba(0,0,0,0.14)"></div>
<div class="abs" style="left:110.80px;top:623.30px;width:2px;height:18.60px;background:rgba(0,0,0,0.14)"></div>
<div class="abs" style="left:140.40px;top:623.30px;width:2px;height:18.60px;background:rgba(0,0,0,0.14)"></div>
<div class="abs" style="left:170.00px;top:623.30px;width:2px;height:18.60px;background:rgba(255,255,255,0.13)"></div>
<div class="abs" style="left:110.80px;top:641.70px;width:2px;height:18.60px;background:rgba(0,0,0,0.14)"></div>
<div class="abs" style="left:140.40px;top:641.70px;width:2px;height:18.60px;background:rgba(0,0,0,0.14)"></div>
<div class="abs" style="left:170.00px;top:641.70px;width:2px;height:18.60px;background:rgba(255,255,255,0.13)"></div>
<div class="ln" style="top:144.90px">154</div>
<div class="cl" style="top:144.90px">                <i style="color:#858585">&lt;/</i><i style="color:#5f9cd4">BaseTable</i><i style="color:#858585">&gt;</i></div>
<div class="ln" style="top:163.30px">155</div>
<div class="cl" style="top:163.30px">                <i style="color:#858585">&lt;</i><i style="color:#5f9cd4">BaseTable</i> <i style="color:#aad6f7">id</i><i style="color:#d4d4d4">=</i><i style="color:#cc9377">&quot;154&quot;</i> <i style="color:#aad6f7">comment</i><i style="color:#d4d4d4">=</i><i style="color:#cc9377">&quot;&quot;</i> <i style="color:#aad6f7">name</i><i style="color:#d4d4d4">=</i><i style="color:#cc9377">&quot;(What’s the Story) Morning Glory&quot;</i></div>
<div class="ln" style="top:181.70px">156</div>
<div class="cl" style="top:181.70px">                    <i style="color:#858585">&lt;</i><i style="color:#5f9cd4">UUID</i> <i style="color:#aad6f7">modifications</i><i style="color:#d4d4d4">=</i><i style="color:#cc9377">&quot;0&quot;</i> <i style="color:#aad6f7">userName</i><i style="color:#d4d4d4">=</i><i style="color:#cc9377">&quot;&quot;</i> <i style="color:#aad6f7">accountName</i><i style="color:#d4d4d4">=</i><i style="color:#cc9377">&quot;Admin&quot;</i> <i style="color:#aad6f7">timestamp</i><i style="color:#d4d4d4">=</i></div>
<div class="ln" style="top:200.10px">157</div>
<div class="cl" style="top:200.10px">                    <i style="color:#858585">&lt;</i><i style="color:#5f9cd4">TagList</i><i style="color:#858585">&gt;</i><i style="color:#858585">&lt;/</i><i style="color:#5f9cd4">TagList</i><i style="color:#858585">&gt;</i></div>
<div class="ln" style="top:218.50px">158</div>
<div class="cl" style="top:218.50px">                <i style="color:#858585">&lt;/</i><i style="color:#5f9cd4">BaseTable</i><i style="color:#858585">&gt;</i></div>
<div class="ln" style="top:236.90px">159</div>
<div class="cl" style="top:236.90px">            <i style="color:#858585">&lt;/</i><i style="color:#5f9cd4">BaseTableCatalog</i><i style="color:#858585">&gt;</i></div>
<div class="ln" style="top:255.30px">160</div>
<div class="cl" style="top:255.30px">            <i style="color:#858585">&lt;</i><i style="color:#5f9cd4">TableOccurrenceCatalog</i><i style="color:rgba(227,228,226,0.22)">·</i><i style="color:#aad6f7">membercount</i><i style="color:#d4d4d4">=</i><i style="color:#cc9377">&quot;33&quot;</i><i style="color:#858585">&gt;</i></div>
<div class="ln" style="top:273.70px">161</div>
<div class="cl" style="top:273.70px"><i class="ar">→</i>   <i class="ar">→</i>   <i class="ar">→</i>   <i class="ar">→</i>   <i style="color:#858585">&lt;</i><i style="color:#5f9cd4">UUID</i><i style="color:rgba(227,228,226,0.22)">·</i><i style="color:#aad6f7">modifications</i><i style="color:#d4d4d4">=</i><i style="color:#cc9377">&quot;10&quot;</i><i style="color:rgba(227,228,226,0.22)">·</i><i style="color:#aad6f7">userName</i><i style="color:#d4d4d4">=</i><i style="color:#cc9377">&quot;&quot;</i><i style="color:rgba(227,228,226,0.22)">·</i><i style="color:#aad6f7">accountName</i><i style="color:#d4d4d4">=</i><i style="color:#cc9377">&quot;admin&quot;</i><i style="color:rgba(227,228,226,0.22)">·</i><i style="color:#aad6f7">timestamp</i><i style="color:#d4d4d4">=</i></div>
<div class="ln" style="top:292.10px">162</div>
<div class="cl" style="top:292.10px"><i class="ar">→</i>   <i class="ar">→</i>   <i class="ar">→</i>   <i class="ar">→</i>   <i style="color:#858585">&lt;</i><i style="color:#5f9cd4">TagList</i><i style="color:#858585">&gt;</i><i style="color:#858585">&lt;/</i><i style="color:#5f9cd4">TagList</i><i style="color:#858585">&gt;</i></div>
<div class="ln" style="top:310.50px">163</div>
<div class="cl" style="top:310.50px"><i class="ar">→</i>   <i class="ar">→</i>   <i class="ar">→</i>   <i class="ar">→</i>   <i style="color:#858585">&lt;</i><i style="color:#5f9cd4">TableOccurrence</i><i style="color:rgba(227,228,226,0.22)">·</i><i style="color:#aad6f7">View</i><i style="color:#d4d4d4">=</i><i style="color:#cc9377">&quot;Collapse&quot;</i><i style="color:rgba(227,228,226,0.22)">·</i><i style="color:#aad6f7">height</i><i style="color:#d4d4d4">=</i><i style="color:#cc9377">&quot;86&quot;</i><i style="color:rgba(227,228,226,0.22)">·</i><i style="color:#aad6f7">id</i><i style="color:#d4d4d4">=</i><i style="color:#cc9377">&quot;1065089&quot;</i><i style="color:rgba(227,228,226,0.22)">·</i><i style="color:#aad6f7">name</i><i style="color:#d4d4d4">=</i><i style="color:#cc9377">&quot;</i></div>
<div class="ln" style="top:328.90px">164</div>
<div class="cl" style="top:328.90px"><i class="ar">→</i>   <i class="ar">→</i>   <i class="ar">→</i>   <i class="ar">→</i>   <i class="ar">→</i>   <i style="color:#858585">&lt;</i><i style="color:#5f9cd4">UUID</i><i style="color:rgba(227,228,226,0.22)">·</i><i style="color:#aad6f7">modifications</i><i style="color:#d4d4d4">=</i><i style="color:#cc9377">&quot;7&quot;</i><i style="color:rgba(227,228,226,0.22)">·</i><i style="color:#aad6f7">userName</i><i style="color:#d4d4d4">=</i><i style="color:#cc9377">&quot;&quot;</i><i style="color:rgba(227,228,226,0.22)">·</i><i style="color:#aad6f7">accountName</i><i style="color:#d4d4d4">=</i><i style="color:#cc9377">&quot;Admin&quot;</i><i style="color:rgba(227,228,226,0.22)">·</i><i style="color:#aad6f7">timestamp</i><i style="color:#d4d4d4">=</i></div>
<div class="ln" style="top:347.30px">165</div>
<div class="cl" style="top:347.30px"><i class="ar">→</i>   <i class="ar">→</i>   <i class="ar">→</i>   <i class="ar">→</i>   <i class="ar">→</i>   <i style="color:#858585">&lt;</i><i style="color:#5f9cd4">BaseTableSourceReference</i><i style="color:rgba(227,228,226,0.22)">·</i><i style="color:#aad6f7">type</i><i style="color:#d4d4d4">=</i><i style="color:#cc9377">&quot;BaseTableReference&quot;</i><i style="color:#858585">&gt;</i></div>
<div class="ln" style="top:365.70px">166</div>
<div class="cl" style="top:365.70px"><i class="ar">→</i>   <i class="ar">→</i>   <i class="ar">→</i>   <i class="ar">→</i>   <i class="ar">→</i>   <i class="ar">→</i>   <i style="color:#858585">&lt;</i><i style="color:#5f9cd4">BaseTableReference</i><i style="color:rgba(227,228,226,0.22)">·</i><i style="color:#aad6f7">id</i><i style="color:#d4d4d4">=</i><i style="color:#cc9377">&quot;129&quot;</i><i style="color:rgba(227,228,226,0.22)">·</i><i style="color:#aad6f7">name</i><i style="color:#d4d4d4">=</i><i style="color:#cc9377">&quot;@Sys&quot;</i><i style="color:rgba(227,228,226,0.22)">·</i><i style="color:#aad6f7">UUID</i><i style="color:#d4d4d4">=</i><i style="color:#cc9377">&quot;0369A&quot;</i></div>
<div class="ln" style="top:384.10px">167</div>
<div class="cl" style="top:384.10px"><i class="ar">→</i>   <i class="ar">→</i>   <i class="ar">→</i>   <i class="ar">→</i>   <i class="ar">→</i>   <i style="color:#858585">&lt;/</i><i style="color:#5f9cd4">BaseTableSourceReference</i><i style="color:#858585">&gt;</i></div>
<div class="ln" style="top:402.50px">168</div>
<div class="cl" style="top:402.50px"><i class="ar">→</i>   <i class="ar">→</i>   <i class="ar">→</i>   <i class="ar">→</i>   <i class="ar">→</i>   <i style="color:#858585">&lt;</i><i style="color:#5f9cd4">CoordRect</i><i style="color:rgba(227,228,226,0.22)">·</i><i style="color:#aad6f7">top</i><i style="color:#d4d4d4">=</i><i style="color:#cc9377">&quot;81&quot;</i><i style="color:rgba(227,228,226,0.22)">·</i><i style="color:#aad6f7">left</i><i style="color:#d4d4d4">=</i><i style="color:#cc9377">&quot;1109&quot;</i><i style="color:rgba(227,228,226,0.22)">·</i><i style="color:#aad6f7">bottom</i><i style="color:#d4d4d4">=</i><i style="color:#cc9377">&quot;197&quot;</i><i style="color:rgba(227,228,226,0.22)">·</i><i style="color:#aad6f7">right</i><i style="color:#d4d4d4">=</i><i style="color:#cc9377">&quot;1249&quot;</i></div>
<div class="ln" style="top:420.90px">169</div>
<div class="cl" style="top:420.90px"><i class="ar">→</i>   <i class="ar">→</i>   <i class="ar">→</i>   <i class="ar">→</i>   <i class="ar">→</i>   <i style="color:#858585">&lt;</i><i style="color:#5f9cd4">Color</i><i style="color:rgba(227,228,226,0.22)">·</i><i style="color:#aad6f7">red</i><i style="color:#d4d4d4">=</i><i style="color:#cc9377">&quot;120&quot;</i><i style="color:rgba(227,228,226,0.22)">·</i><i style="color:#aad6f7">green</i><i style="color:#d4d4d4">=</i><i style="color:#cc9377">&quot;120&quot;</i><i style="color:rgba(227,228,226,0.22)">·</i><i style="color:#aad6f7">blue</i><i style="color:#d4d4d4">=</i><i style="color:#cc9377">&quot;120&quot;</i><i style="color:rgba(227,228,226,0.22)">·</i><i style="color:#aad6f7">alpha</i><i style="color:#d4d4d4">=</i><i style="color:#cc9377">&quot;1.00&quot;</i><i style="color:#858585">&gt;</i><i style="color:#858585">&lt;/</i><i style="color:#5f9cd4">Color</i><i style="color:#858585">&gt;</i></div>
<div class="ln" style="top:439.30px">170</div>
<div class="cl" style="top:439.30px"><i class="ar">→</i>   <i class="ar">→</i>   <i class="ar">→</i>   <i class="ar">→</i>   <i class="ar">→</i>   <i style="color:#858585">&lt;</i><i style="color:#5f9cd4">TagList</i><i style="color:#858585">&gt;</i><i style="color:#858585">&lt;/</i><i style="color:#5f9cd4">TagList</i><i style="color:#858585">&gt;</i></div>
<div class="ln" style="top:457.70px">171</div>
<div class="cl" style="top:457.70px"><i class="ar">→</i>   <i class="ar">→</i>   <i class="ar">→</i>   <i class="ar">→</i>   <i style="color:#858585">&lt;/</i><i style="color:#5f9cd4">TableOccurrence</i><i style="color:#858585">&gt;</i></div>
<div class="ln" style="top:476.10px">172</div>
<div class="cl" style="top:476.10px"><i class="ar">→</i>   <i class="ar">→</i>   <i class="ar">→</i>   <i class="ar">→</i>   <i style="color:#858585">&lt;</i><i style="color:#5f9cd4">TableOccurrence</i><i style="color:rgba(227,228,226,0.22)">·</i><i style="color:#aad6f7">View</i><i style="color:#d4d4d4">=</i><i style="color:#cc9377">&quot;Related&quot;</i><i style="color:rgba(227,228,226,0.22)">·</i><i style="color:#aad6f7">height</i><i style="color:#d4d4d4">=</i><i style="color:#cc9377">&quot;62&quot;</i><i style="color:rgba(227,228,226,0.22)">·</i><i style="color:#aad6f7">id</i><i style="color:#d4d4d4">=</i><i style="color:#cc9377">&quot;1065090&quot;</i><i style="color:rgba(227,228,226,0.22)">·</i><i style="color:#aad6f7">name</i><i style="color:#d4d4d4">=</i><i style="color:#cc9377">&quot;</i></div>
<div class="ln" style="top:494.50px">173</div>
<div class="cl" style="top:494.50px"><i class="ar">→</i>   <i class="ar">→</i>   <i class="ar">→</i>   <i class="ar">→</i>   <i class="ar">→</i>   <i style="color:#858585">&lt;</i><i style="color:#5f9cd4">UUID</i><i style="color:rgba(227,228,226,0.22)">·</i><i style="color:#aad6f7">modifications</i><i style="color:#d4d4d4">=</i><i style="color:#cc9377">&quot;8&quot;</i><i style="color:rgba(227,228,226,0.22)">·</i><i style="color:#aad6f7">userName</i><i style="color:#d4d4d4">=</i><i style="color:#cc9377">&quot;&quot;</i><i style="color:rgba(227,228,226,0.22)">·</i><i style="color:#aad6f7">accountName</i><i style="color:#d4d4d4">=</i><i style="color:#cc9377">&quot;admin&quot;</i><i style="color:rgba(227,228,226,0.22)">·</i><i style="color:#aad6f7">timestamp</i><i style="color:#d4d4d4">=</i></div>
<div class="ln" style="top:512.90px">174</div>
<div class="cl" style="top:512.90px"><i class="ar">→</i>   <i class="ar">→</i>   <i class="ar">→</i>   <i class="ar">→</i>   <i class="ar">→</i>   <i style="color:#858585">&lt;</i><i style="color:#5f9cd4">BaseTableSourceReference</i><i style="color:rgba(227,228,226,0.22)">·</i><i style="color:#aad6f7">type</i><i style="color:#d4d4d4">=</i><i style="color:#cc9377">&quot;BaseTableReference&quot;</i><i style="color:#858585">&gt;</i></div>
<div class="ln" style="top:531.30px">175</div>
<div class="cl" style="top:531.30px"><i class="ar">→</i>   <i class="ar">→</i>   <i class="ar">→</i>   <i class="ar">→</i>   <i class="ar">→</i>   <i class="ar">→</i>   <i style="color:#858585">&lt;</i><i style="color:#5f9cd4">BaseTableReference</i><i style="color:rgba(227,228,226,0.22)">·</i><i style="color:#aad6f7">id</i><i style="color:#d4d4d4">=</i><i style="color:#cc9377">&quot;130&quot;</i><i style="color:rgba(227,228,226,0.22)">·</i><i style="color:#aad6f7">name</i><i style="color:#d4d4d4">=</i><i style="color:#cc9377">&quot;Shakermaker&quot;</i><i style="color:rgba(227,228,226,0.22)">·</i><i style="color:#aad6f7">UUID</i><i style="color:#d4d4d4">=</i><i style="color:#cc9377">&quot;0</i></div>
<div class="ln" style="top:549.70px">176</div>
<div class="cl" style="top:549.70px"><i class="ar">→</i>   <i class="ar">→</i>   <i class="ar">→</i>   <i class="ar">→</i>   <i class="ar">→</i>   <i style="color:#858585">&lt;/</i><i style="color:#5f9cd4">BaseTableSourceReference</i><i style="color:#858585">&gt;</i></div>
<div class="ln" style="top:568.10px">177</div>
<div class="cl" style="top:568.10px"><i class="ar">→</i>   <i class="ar">→</i>   <i class="ar">→</i>   <i class="ar">→</i>   <i class="ar">→</i>   <i style="color:#858585">&lt;</i><i style="color:#5f9cd4">CoordRect</i><i style="color:rgba(227,228,226,0.22)">·</i><i style="color:#aad6f7">top</i><i style="color:#d4d4d4">=</i><i style="color:#cc9377">&quot;20&quot;</i><i style="color:rgba(227,228,226,0.22)">·</i><i style="color:#aad6f7">left</i><i style="color:#d4d4d4">=</i><i style="color:#cc9377">&quot;208&quot;</i><i style="color:rgba(227,228,226,0.22)">·</i><i style="color:#aad6f7">bottom</i><i style="color:#d4d4d4">=</i><i style="color:#cc9377">&quot;138&quot;</i><i style="color:rgba(227,228,226,0.22)">·</i><i style="color:#aad6f7">right</i><i style="color:#d4d4d4">=</i><i style="color:#cc9377">&quot;338&quot;</i></div>
<div class="ln" style="top:586.50px">178</div>
<div class="cl" style="top:586.50px"><i class="ar">→</i>   <i class="ar">→</i>   <i class="ar">→</i>   <i class="ar">→</i>   <i class="ar">→</i>   <i style="color:#858585">&lt;</i><i style="color:#5f9cd4">Color</i><i style="color:rgba(227,228,226,0.22)">·</i><i style="color:#aad6f7">red</i><i style="color:#d4d4d4">=</i><i style="color:#cc9377">&quot;120&quot;</i><i style="color:rgba(227,228,226,0.22)">·</i><i style="color:#aad6f7">green</i><i style="color:#d4d4d4">=</i><i style="color:#cc9377">&quot;120&quot;</i><i style="color:rgba(227,228,226,0.22)">·</i><i style="color:#aad6f7">blue</i><i style="color:#d4d4d4">=</i><i style="color:#cc9377">&quot;120&quot;</i><i style="color:rgba(227,228,226,0.22)">·</i><i style="color:#aad6f7">alpha</i><i style="color:#d4d4d4">=</i><i style="color:#cc9377">&quot;1.00&quot;</i><i style="color:#858585">&gt;</i><i style="color:#858585">&lt;/</i><i style="color:#5f9cd4">Color</i><i style="color:#858585">&gt;</i></div>
<div class="ln" style="top:604.90px">179</div>
<div class="cl" style="top:604.90px"><i class="ar">→</i>   <i class="ar">→</i>   <i class="ar">→</i>   <i class="ar">→</i>   <i class="ar">→</i>   <i style="color:#858585">&lt;</i><i style="color:#5f9cd4">TagList</i><i style="color:#858585">&gt;</i><i style="color:#858585">&lt;/</i><i style="color:#5f9cd4">TagList</i><i style="color:#858585">&gt;</i></div>
<div class="ln" style="top:623.30px">180</div>
<div class="cl" style="top:623.30px"><i class="ar">→</i>   <i class="ar">→</i>   <i class="ar">→</i>   <i class="ar">→</i>   <i style="color:#858585">&lt;/</i><i style="color:#5f9cd4">TableOccurrence</i><i style="color:#858585">&gt;</i></div>
<div class="ln" style="top:641.70px">181</div>
<div class="cl" style="top:641.70px"><i class="ar">→</i>   <i class="ar">→</i>   <i class="ar">→</i>   <i class="ar">→</i>   <i style="color:#858585">&lt;</i><i style="color:#5f9cd4">TableOccurrence</i><i style="color:rgba(227,228,226,0.22)">·</i><i style="color:#aad6f7">View</i><i style="color:#d4d4d4">=</i><i style="color:#cc9377">&quot;Related&quot;</i><i style="color:rgba(227,228,226,0.22)">·</i><i style="color:#aad6f7">height</i><i style="color:#d4d4d4">=</i><i style="color:#cc9377">&quot;74&quot;</i><i style="color:rgba(227,228,226,0.22)">·</i><i style="color:#aad6f7">id</i><i style="color:#d4d4d4">=</i><i style="color:#cc9377">&quot;1065091&quot;</i><i style="color:rgba(227,228,226,0.22)">·</i><i style="color:#aad6f7">name</i><i style="color:#d4d4d4">=</i><i style="color:#cc9377">&quot;</i></div>
    </div>
    <div class="abs" style="left:0;top:35px;width:632px;height:73.6px;background:#1f1f1f;box-shadow:0 3px 4px -1px #000;overflow:hidden">
      <div class="abs" style="left:0;top:-71px;width:635px;height:682px">
      <div class="ln" style="top:71.00px">2</div>
<div class="cl" style="top:71.00px"><i style="color:#858585">&lt;</i><i style="color:#5f9cd4">FMSaveAsXML</i> <i style="color:#aad6f7">version</i><i style="color:#d4d4d4">=</i><i style="color:#cc9377">&quot;2.2.3.3&quot;</i> <i style="color:#aad6f7">Source</i><i style="color:#d4d4d4">=</i><i style="color:#cc9377">&quot;22.1.1&quot;</i> <i style="color:#aad6f7">File</i><i style="color:#d4d4d4">=</i><i style="color:#cc9377">&quot;Oasis upgraded.fmp12&quot;</i></div>
<div class="ln" style="top:89.40px">3</div>
<div class="cl" style="top:89.40px">    <i style="color:#858585">&lt;</i><i style="color:#5f9cd4">Structure</i> <i style="color:#aad6f7">membercount</i><i style="color:#d4d4d4">=</i><i style="color:#cc9377">&quot;1&quot;</i><i style="color:#858585">&gt;</i></div>
<div class="ln" style="top:107.80px">4</div>
<div class="cl" style="top:107.80px">        <i style="color:#858585">&lt;</i><i style="color:#5f9cd4">AddAction</i> <i style="color:#aad6f7">membercount</i><i style="color:#d4d4d4">=</i><i style="color:#cc9377">&quot;12&quot;</i><i style="color:#858585">&gt;</i></div>
<div class="ln" style="top:126.20px">24</div>
<div class="cl" style="top:126.20px">            <i style="color:#858585">&lt;</i><i style="color:#5f9cd4">BaseTableCatalog</i> <i style="color:#aad6f7">membercount</i><i style="color:#d4d4d4">=</i><i style="color:#cc9377">&quot;26&quot;</i><i style="color:#858585">&gt;</i></div>
      </div>
    </div>
    <div class="abs" style="left:632.00px;top:35.50px;width:72.00px;height:588.50px;background:#1f1f1f;"></div>
<div class="abs" style="left:632.00px;top:35.50px;width:6.80px;height:588.50px;background:#191919;"></div>
<div class="abs" style="left:703.50px;top:35.50px;width:15.50px;height:588.50px;background:#1a1a1a;"></div>
<div class="abs" style="left:653.00px;top:36.20px;width:6.00px;height:2.20px;background:rgba(86,156,214,0.40);"></div>
<div class="abs" style="left:660.50px;top:36.20px;width:5.17px;height:2.20px;background:rgba(170,214,247,0.32);"></div>
<div class="abs" style="left:666.77px;top:36.20px;width:8.47px;height:2.20px;background:rgba(170,214,247,0.32);"></div>
<div class="abs" style="left:676.34px;top:36.20px;width:5.55px;height:2.20px;background:rgba(200,200,200,0.28);"></div>
<div class="abs" style="left:685.49px;top:36.20px;width:7.63px;height:2.20px;background:rgba(204,147,119,0.40);"></div>
<div class="abs" style="left:694.22px;top:36.20px;width:7.55px;height:2.20px;background:rgba(204,147,119,0.45);"></div>
<div class="abs" style="left:650.00px;top:42.40px;width:6.00px;height:2.20px;background:rgba(86,156,214,0.40);"></div>
<div class="abs" style="left:657.50px;top:42.40px;width:4.12px;height:2.20px;background:rgba(170,214,247,0.32);"></div>
<div class="abs" style="left:665.22px;top:42.40px;width:7.67px;height:2.20px;background:rgba(170,214,247,0.32);"></div>
<div class="abs" style="left:673.99px;top:42.40px;width:2.29px;height:2.20px;background:rgba(204,147,119,0.40);"></div>
<div class="abs" style="left:677.38px;top:42.40px;width:6.58px;height:2.20px;background:rgba(200,200,200,0.28);"></div>
<div class="abs" style="left:685.06px;top:42.40px;width:6.36px;height:2.20px;background:rgba(204,147,119,0.45);"></div>
<div class="abs" style="left:692.52px;top:42.40px;width:2.44px;height:2.20px;background:rgba(170,214,247,0.30);"></div>
<div class="abs" style="left:698.57px;top:42.40px;width:3.69px;height:2.20px;background:rgba(170,214,247,0.30);"></div>
<div class="abs" style="left:650.00px;top:48.60px;width:6.00px;height:2.20px;background:rgba(86,156,214,0.40);"></div>
<div class="abs" style="left:657.50px;top:48.60px;width:4.28px;height:2.20px;background:rgba(170,214,247,0.32);"></div>
<div class="abs" style="left:662.88px;top:48.60px;width:3.37px;height:2.20px;background:rgba(170,214,247,0.32);"></div>
<div class="abs" style="left:669.85px;top:48.60px;width:4.06px;height:2.20px;background:rgba(170,214,247,0.32);"></div>
<div class="abs" style="left:677.51px;top:48.60px;width:2.59px;height:2.20px;background:rgba(200,200,200,0.28);"></div>
<div class="abs" style="left:681.21px;top:48.60px;width:8.98px;height:2.20px;background:rgba(204,147,119,0.45);"></div>
<div class="abs" style="left:691.29px;top:48.60px;width:7.88px;height:2.20px;background:rgba(200,200,200,0.28);"></div>
<div class="abs" style="left:700.27px;top:48.60px;width:3.23px;height:2.20px;background:rgba(200,200,200,0.28);"></div>
<div class="abs" style="left:651.00px;top:53.20px;width:16.00px;height:2.20px;background:rgba(47,80,128,0.85);"></div>
<div class="abs" style="left:639.00px;top:55.40px;width:64.50px;height:513.10px;background:#2f5080;"></div>
<div class="abs" style="left:669.50px;top:55.40px;width:34.00px;height:513.10px;background:transparent;background:repeating-linear-gradient(180deg,transparent 0,transparent 3.70px,#27344a 3.70px,#27344a 5.90px,transparent 5.90px,transparent 15.4px)"></div>
<div class="abs" style="left:700.50px;top:55.40px;width:3.00px;height:513.10px;background:transparent;background:repeating-linear-gradient(180deg,transparent 0,transparent 8.80px,#27344a 8.80px,#27344a 11.00px,transparent 11.00px,transparent 15.4px)"></div>
<div class="abs" style="left:679.00px;top:55.40px;width:24.50px;height:513.10px;background:transparent;background:repeating-linear-gradient(180deg,transparent 0,transparent 12.40px,#27344a 12.40px,#27344a 14.60px,transparent 14.60px,transparent 15.4px)"></div>
<div class="abs" style="left:653.00px;top:55.40px;width:50.50px;height:513.10px;background:transparent;background:repeating-linear-gradient(180deg,rgba(140,170,210,0.04) 0,rgba(140,170,210,0.04) 1px,transparent 1px,transparent 1.72px)"></div>
<div class="abs" style="left:650.00px;top:568.00px;width:29.00px;height:2.00px;background:rgba(120,150,190,0.40);"></div>
<div class="abs" style="left:661.00px;top:570.50px;width:18.00px;height:2.00px;background:rgba(190,160,130,0.30);"></div>
<div class="abs" style="left:657.50px;top:571.00px;width:1.60px;height:23.00px;background:rgba(110,140,180,0.45);"></div>
<div class="abs" style="left:661.00px;top:571.00px;width:1.60px;height:23.00px;background:rgba(110,140,180,0.45);"></div>
<div class="abs" style="left:665.50px;top:571.00px;width:1.60px;height:23.00px;background:rgba(110,140,180,0.45);"></div>
<div class="abs" style="left:656.00px;top:592.00px;width:14.00px;height:8.00px;background:rgba(110,140,175,0.30);"></div>
<div class="abs" style="left:663.00px;top:600.00px;width:1.60px;height:22.00px;background:rgba(110,140,180,0.40);"></div>
<div class="abs" style="left:667.00px;top:600.00px;width:1.60px;height:22.00px;background:rgba(110,140,180,0.40);"></div>
<div class="abs" style="left:669.19px;top:592.50px;width:7.90px;height:1.70px;background:rgba(200,200,200,0.28);"></div>
<div class="abs" style="left:678.29px;top:592.50px;width:11.24px;height:1.70px;background:rgba(86,156,214,0.40);"></div>
<div class="abs" style="left:690.73px;top:592.50px;width:8.63px;height:1.70px;background:rgba(206,145,120,0.40);"></div>
<div class="abs" style="left:700.56px;top:592.50px;width:2.44px;height:1.70px;background:rgba(86,156,214,0.40);"></div>
<div class="abs" style="left:669.30px;top:596.10px;width:5.11px;height:1.70px;background:rgba(86,156,214,0.40);"></div>
<div class="abs" style="left:675.61px;top:596.10px;width:7.87px;height:1.70px;background:rgba(86,156,214,0.40);"></div>
<div class="abs" style="left:684.67px;top:596.10px;width:6.57px;height:1.70px;background:rgba(156,220,254,0.30);"></div>
<div class="abs" style="left:692.45px;top:596.10px;width:5.09px;height:1.70px;background:rgba(156,220,254,0.30);"></div>
<div class="abs" style="left:698.74px;top:596.10px;width:4.26px;height:1.70px;background:rgba(86,156,214,0.40);"></div>
<div class="abs" style="left:671.71px;top:599.70px;width:9.04px;height:1.70px;background:rgba(206,145,120,0.40);"></div>
<div class="abs" style="left:681.95px;top:599.70px;width:4.43px;height:1.70px;background:rgba(206,145,120,0.40);"></div>
<div class="abs" style="left:687.58px;top:599.70px;width:5.71px;height:1.70px;background:rgba(206,145,120,0.40);"></div>
<div class="abs" style="left:694.49px;top:599.70px;width:8.51px;height:1.70px;background:rgba(200,200,200,0.28);"></div>
<div class="abs" style="left:670.36px;top:603.30px;width:9.47px;height:1.70px;background:rgba(86,156,214,0.40);"></div>
<div class="abs" style="left:681.03px;top:603.30px;width:9.43px;height:1.70px;background:rgba(86,156,214,0.40);"></div>
<div class="abs" style="left:691.66px;top:603.30px;width:6.55px;height:1.70px;background:rgba(86,156,214,0.40);"></div>
<div class="abs" style="left:699.41px;top:603.30px;width:3.59px;height:1.70px;background:rgba(156,220,254,0.30);"></div>
<div class="abs" style="left:672.39px;top:606.90px;width:3.88px;height:1.70px;background:rgba(156,220,254,0.30);"></div>
<div class="abs" style="left:677.47px;top:606.90px;width:7.45px;height:1.70px;background:rgba(200,200,200,0.28);"></div>
<div class="abs" style="left:686.13px;top:606.90px;width:11.69px;height:1.70px;background:rgba(86,156,214,0.40);"></div>
<div class="abs" style="left:699.01px;top:606.90px;width:3.99px;height:1.70px;background:rgba(200,200,200,0.28);"></div>
<div class="abs" style="left:670.11px;top:610.50px;width:10.50px;height:1.70px;background:rgba(200,200,200,0.28);"></div>
<div class="abs" style="left:681.81px;top:610.50px;width:7.81px;height:1.70px;background:rgba(86,156,214,0.40);"></div>
<div class="abs" style="left:690.81px;top:610.50px;width:8.26px;height:1.70px;background:rgba(200,200,200,0.28);"></div>
<div class="abs" style="left:700.27px;top:610.50px;width:2.73px;height:1.70px;background:rgba(206,145,120,0.40);"></div>
<div class="abs" style="left:672.28px;top:614.10px;width:11.92px;height:1.70px;background:rgba(156,220,254,0.30);"></div>
<div class="abs" style="left:685.40px;top:614.10px;width:9.29px;height:1.70px;background:rgba(200,200,200,0.28);"></div>
<div class="abs" style="left:695.89px;top:614.10px;width:7.11px;height:1.70px;background:rgba(206,145,120,0.40);"></div>
<div class="abs" style="left:671.57px;top:617.70px;width:4.90px;height:1.70px;background:rgba(200,200,200,0.28);"></div>
<div class="abs" style="left:677.67px;top:617.70px;width:5.56px;height:1.70px;background:rgba(206,145,120,0.40);"></div>
<div class="abs" style="left:684.43px;top:617.70px;width:7.34px;height:1.70px;background:rgba(86,156,214,0.40);"></div>
<div class="abs" style="left:692.97px;top:617.70px;width:3.80px;height:1.70px;background:rgba(206,145,120,0.40);"></div>
<div class="abs" style="left:697.97px;top:617.70px;width:5.03px;height:1.70px;background:rgba(156,220,254,0.30);"></div>
<div class="abs" style="left:661.00px;top:621.50px;width:42.00px;height:2.00px;background:rgba(160,170,190,0.30);"></div>
<div class="abs" style="left:704.50px;top:44.20px;width:12.50px;height:2.00px;background:#cfcfcf;"></div>
  </div>

  <!-- status bar -->
  <div class="abs status">
    <div class="abs" style="left:0;top:-1px;width:334px;height:23px;background:#3a7fd5"></div>
<svg class="abs" style="left:12px;top:4.5px" width="12" height="13" viewBox="0 0 12 13"><path d="M1.2 4.2L5 8 1.2 11.8M10.8 1.2L7 5 10.8 8.8" stroke="#ffffff" stroke-width="1.2" fill="none"/></svg>
<div class="abs" style="left:28.5px;top:-1px;height:22px;line-height:22px;font-size:12.8px;color:#ffffff;white-space:nowrap;">開発コンテナー: filemaker-server-dev @ desktop-...</div>
<svg class="abs" style="left:341.5px;top:4px" width="14" height="14" viewBox="0 0 14 14"><circle cx="7" cy="7" r="6" stroke="#cccccc" stroke-width="1.1" fill="none"/><path d="M4.6 4.6L9.4 9.4M9.4 4.6L4.6 9.4" stroke="#cccccc" stroke-width="1.1"/></svg>
<div class="abs" style="left:359.0px;top:-1px;height:22px;line-height:22px;font-size:12.8px;color:#cccccc;white-space:nowrap;">0</div>
<svg class="abs" style="left:370.5px;top:4px" width="14" height="14" viewBox="0 0 14 14"><path d="M7 1.2L13.2 12.6H0.8Z" stroke="#cccccc" stroke-width="1.1" fill="none" stroke-linejoin="round"/><path d="M7 5V9M7 10.3V11.3" stroke="#cccccc" stroke-width="1.1"/></svg>
<div class="abs" style="left:388.0px;top:-1px;height:22px;line-height:22px;font-size:12.8px;color:#cccccc;white-space:nowrap;">0</div>
<svg class="abs" style="left:413px;top:4px" width="14" height="14" viewBox="0 0 14 14"><circle cx="7" cy="5.5" r="1.4" fill="#cccccc"/><path d="M4.2 2.8Q2.8 5.5 4.2 8.2M9.8 2.8Q11.2 5.5 9.8 8.2M2.3 1.2Q0 5.5 2.3 9.8M11.7 1.2Q14 5.5 11.7 9.8M7 7V13M4.5 13H9.5" stroke="#cccccc" stroke-width="1.1" fill="none"/></svg>
<div class="abs" style="left:430.0px;top:-1px;height:22px;line-height:22px;font-size:12.8px;color:#cccccc;white-space:nowrap;">4</div>
<div class="abs" style="left:526.3px;top:-1px;height:22px;line-height:22px;font-size:12.8px;color:#cccccc;white-space:nowrap;">行 460、列 38 (21363 個選択)</div>
<div class="abs" style="left:717.5px;top:-1px;height:22px;line-height:22px;font-size:12.8px;color:#cccccc;white-space:nowrap;">タブのサイズ: 4</div>
<div class="abs" style="left:821.9px;top:-1px;height:22px;line-height:22px;font-size:12.8px;color:#cccccc;white-space:nowrap;">UTF-16 LE</div>
<div class="abs" style="left:901.2px;top:-1px;height:22px;line-height:22px;font-size:12.8px;color:#cccccc;white-space:nowrap;">LF</div>
<div class="abs" style="left:931.5px;top:-1px;height:22px;line-height:22px;font-size:12px;color:#cccccc;white-space:nowrap;-webkit-text-stroke:0">{</div>
<div class="abs" style="left:939.5px;top:-1px;height:22px;line-height:22px;font-size:12px;color:#cccccc;white-space:nowrap;-webkit-text-stroke:0">}</div>
<div class="abs" style="left:952.0px;top:-1px;height:22px;line-height:22px;font-size:12.8px;color:#cccccc;white-space:nowrap;">XML</div>
<svg class="abs" style="left:994px;top:4px" width="15" height="15" viewBox="0 0 15 15"><path d="M2 11.5H11.5Q10 10 10 8V6Q10 3 6.8 3Q3.5 3 3.5 6V8Q3.5 10 2 11.5Z M5.5 13.2Q6.8 14.4 8 13.2" stroke="#cccccc" stroke-width="1.1" fill="none"/><circle cx="11.2" cy="3.3" r="2.6" fill="#cccccc" stroke="#181818" stroke-width="1"/></svg>
  </div>
  <div class="winborder"></div>
</div>
</body></html>
